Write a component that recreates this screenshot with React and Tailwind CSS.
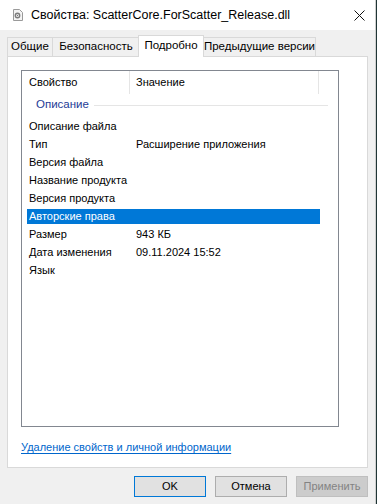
import React from 'react';

const rows = [
  { name: 'Описание файла', value: '' },
  { name: 'Тип', value: 'Расширение приложения' },
  { name: 'Версия файла', value: '' },
  { name: 'Название продукта', value: '' },
  { name: 'Версия продукта', value: '' },
  { name: 'Авторские права', value: '', selected: true },
  { name: 'Размер', value: '943 КБ' },
  { name: 'Дата изменения', value: '09.11.2024 15:52' },
  { name: 'Язык', value: '' },
];

const tabs = [
  { label: 'Общие', w: 'w-[45px]' },
  { label: 'Безопасность', w: 'w-[87px]' },
  { label: 'Подробно', w: 'w-[66px]', active: true },
  { label: 'Предыдущие версии', w: 'w-[113px]' },
];

const DllIcon = () => (
  <svg width="12" height="12" viewBox="0 0 12 12">
    <path d="M1.5 0.5h6l3 3v8h-9z" fill="#f4f4f4" stroke="#9a9a9a" />
    <circle cx="5.5" cy="6.5" r="2.2" fill="none" stroke="#7c7c7c" strokeWidth="1.4" />
    <circle cx="5.5" cy="6.5" r="0.7" fill="#7c7c7c" />
  </svg>
);

const App = () => {
  return (
    <div className="w-[377px] h-[504px] flex bg-[#f0f0f0] text-[11px] text-black whitespace-nowrap" style={{ fontFamily: '"Liberation Sans", Arial, sans-serif' }}>
      <div className="w-[375px] flex flex-col">
        {/* Title bar */}
        <div className="h-[30px] bg-white flex items-center">
          <div className="ml-[12px] mr-[7px] flex items-center">
            <DllIcon />
          </div>
          <span className="leading-none text-[12.5px]">Свойства: ScatterCore.ForScatter_Release.dll</span>
          <div className="ml-auto mr-[10px] flex items-center">
            <svg width="11" height="11" viewBox="0 0 11 11">
              <path d="M0.5 0.5L10.5 10.5M10.5 0.5L0.5 10.5" stroke="#111" strokeWidth="1" />
            </svg>
          </div>
        </div>

        {/* Tabs */}
        <div className="mt-[5px] h-[22px] flex items-end pl-[7px] relative z-10 text-[11.5px]">
          {tabs.map((t) =>
            t.active ? (
              <div key={t.label} className={`${t.w} h-[22px] bg-white border border-b-0 border-[#d9d9d9] flex items-center justify-center -mx-[1px] pb-[2px]`}>
                {t.label}
              </div>
            ) : (
              <div key={t.label} className={`${t.w} h-[20px] bg-[#f0f0f0] border border-[#d9d9d9] border-r-0 last:border-r flex items-center justify-center`}>
                {t.label}
              </div>
            )
          )}
        </div>

        {/* Panel */}
        <div className="mx-[7px] -mt-[1px] h-[412px] bg-white border border-[#d9d9d9] flex flex-col">
          <div className="mt-[13px] ml-[13px] w-[318px] h-[357px] border border-[#828790] flex flex-col">
            {/* Header */}
            <div className="h-[24px] flex items-stretch">
              <div className="w-[108px] pl-[7px] flex items-center border-r border-[#e5e5e5] mb-[1px]">Свойство</div>
              <div className="w-[189px] pl-[6px] flex items-center border-r border-[#e5e5e5] mb-[1px]">Значение</div>
            </div>
            {/* Group */}
            <div className="h-[20px] flex items-center pl-[14px] pr-[10px]">
              <span className="text-[#1e3c96] text-[11.5px] mr-[5px]">Описание</span>
              <div className="flex-1 h-[1px] bg-[#e5e5e5]"></div>
            </div>
            <div className="h-[2px]"></div>
            {rows.map((r) => (
              <div key={r.name} className="h-[18px] flex items-center pl-[5px]">
                <div className={`w-[293px] h-[15px] flex items-center ${r.selected ? 'bg-[#0078d7] text-white' : ''}`}>
                  <div className="w-[109px] pl-[2px]">{r.name}</div>
                  <div>{r.value}</div>
                </div>
              </div>
            ))}
          </div>
          <div className="mt-[12px] ml-[13px]">
            <span className="text-[#0066cc] underline underline-offset-2">Удаление свойств и личной информации</span>
          </div>
        </div>

        {/* Buttons */}
        <div className="mt-[8px] flex justify-end gap-[9px] pr-[7px]">
          <button className="w-[72px] h-[21px] bg-[#e1e1e1] border border-[#0078d7] flex items-center justify-center">OK</button>
          <button className="w-[72px] h-[21px] bg-[#e1e1e1] border border-[#adadad] flex items-center justify-center">Отмена</button>
          <button className="w-[72px] h-[21px] bg-[#cccccc] border border-[#bfbfbf] text-[#838383] flex items-center justify-center">Применить</button>
        </div>
      </div>
      <div className="w-[1px] bg-[#cfcfcf]"></div>
      <div className="w-[1px] bg-[#1f3535]"></div>
    </div>
  );
};

export default App;
